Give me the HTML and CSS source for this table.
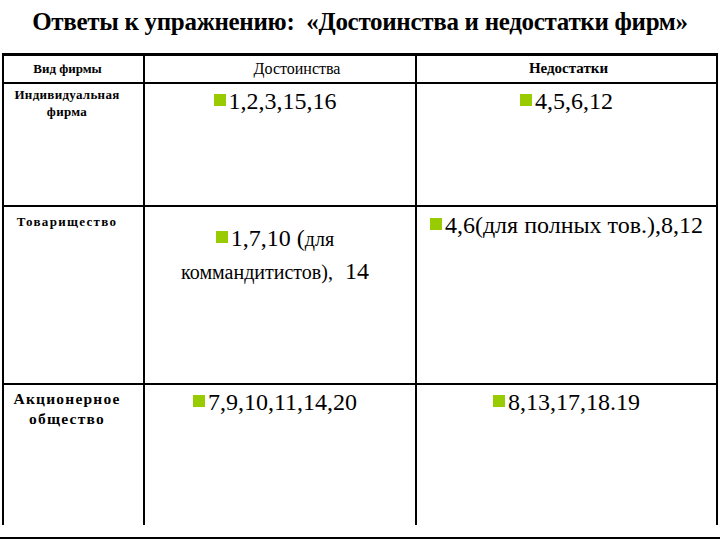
FILE: index.html
```html
<!DOCTYPE html>
<html lang="ru">
<head>
<meta charset="utf-8">
<title>Ответы к упражнению</title>
<link rel="stylesheet" href="styles.css">
</head>
<body>
<main class="slide">
  <h1 class="title">Ответы к упражнению:&nbsp; «Достоинства и недостатки фирм»</h1>
  <div class="grid">
    <div class="cell head head-kind">Вид фирмы</div>
    <div class="cell head head-pros">Достоинства</div>
    <div class="cell head head-cons">Недостатки</div>

    <div class="cell label label-r1">Индивидуальная<br>фирма</div>
    <div class="cell item item-pros item-r1"><span class="bullet"></span>1,2,3,15,16</div>
    <div class="cell item item-cons item-r1"><span class="bullet"></span>4,5,6,12</div>

    <div class="cell label label-r2">Товарищество</div>
    <div class="cell item item-pros item-r2a"><span class="bullet"></span>1,7,10 (<span class="small">для</span><br><span class="small">коммандитистов),</span>&nbsp; 14</div>
    <div class="cell item item-cons item-r2b"><span class="bullet"></span>4,6(для полных тов.),8,12</div>

    <div class="cell label label-r3 last">Акционерное<br>общество</div>
    <div class="cell item item-pros item-r3 last"><span class="bullet"></span>7,9,10,11,14,20</div>
    <div class="cell item item-cons item-r3 last"><span class="bullet"></span>8,13,17,18.19</div>
  </div>
  <div class="rule"></div>
</main>
</body>
</html>
```
FILE: styles.css
```css
* { box-sizing: border-box; }
html, body { margin: 0; padding: 0; background: #fff; }
body {
  font-family: "Liberation Serif", "DejaVu Serif", serif;
  color: #000;
  width: 720px;
  height: 540px;
  overflow: hidden;
}
.slide {
  display: flex;
  flex-direction: column;
}
.title {
  margin: 0;
  height: 53px;
  padding-top: 7px;
  font-size: 25px;
  letter-spacing: -0.3px;
  font-weight: bold;
  text-align: center;
  line-height: 30px;
  white-space: nowrap;
}
.grid {
  margin-left: 2px;
  width: 716px;
  display: grid;
  grid-template-columns: 141px 272px 299px;
  grid-template-rows: 28px 123px 178px 140px;
  border-top: 3px solid #000;
  border-left: 2px solid #000;
  border-right: 2px solid #000;
}
.cell {
  border-bottom: 2px solid #000;
  border-right: 2px solid #000;
  text-align: center;
}
.cell:nth-child(3n) { border-right: none; }
.cell.last { border-bottom: none; }

.head {
  display: flex;
  align-items: center;
  justify-content: center;
  padding-bottom: 1px;
}
.head-kind { font-size: 13px; font-weight: bold; padding-right: 12px; }
.head-pros { font-size: 16px; padding-left: 34px; }
.head-cons { font-size: 15px; font-weight: bold; padding-left: 4px; }

.label {
  font-weight: bold;
  font-size: 13px;
  letter-spacing: 0.3px;
  line-height: 17px;
  padding-right: 13px;
}
.label-r1 { padding-top: 2px; }
.label-r2 { padding-top: 6px; letter-spacing: 1.3px; }
.label-r3 { font-size: 15.5px; letter-spacing: 1.2px; line-height: 20px; padding-top: 4px; }

.item {
  font-size: 24px;
  line-height: normal;
  padding-top: 4px;
}
.item-pros { padding-right: 10px; }
.item-r2a { line-height: 32px; padding-top: 15px; }
.item-r2b { padding-top: 5px; white-space: nowrap; }
.small { font-size: 20px; }

.bullet {
  display: inline-block;
  width: 12px;
  height: 12px;
  background: #99cc00;
  margin-right: 3px;
  vertical-align: 3px;
}

.rule {
  margin-top: 12px;
  height: 2px;
  background: #000;
  width: 720px;
}
```
